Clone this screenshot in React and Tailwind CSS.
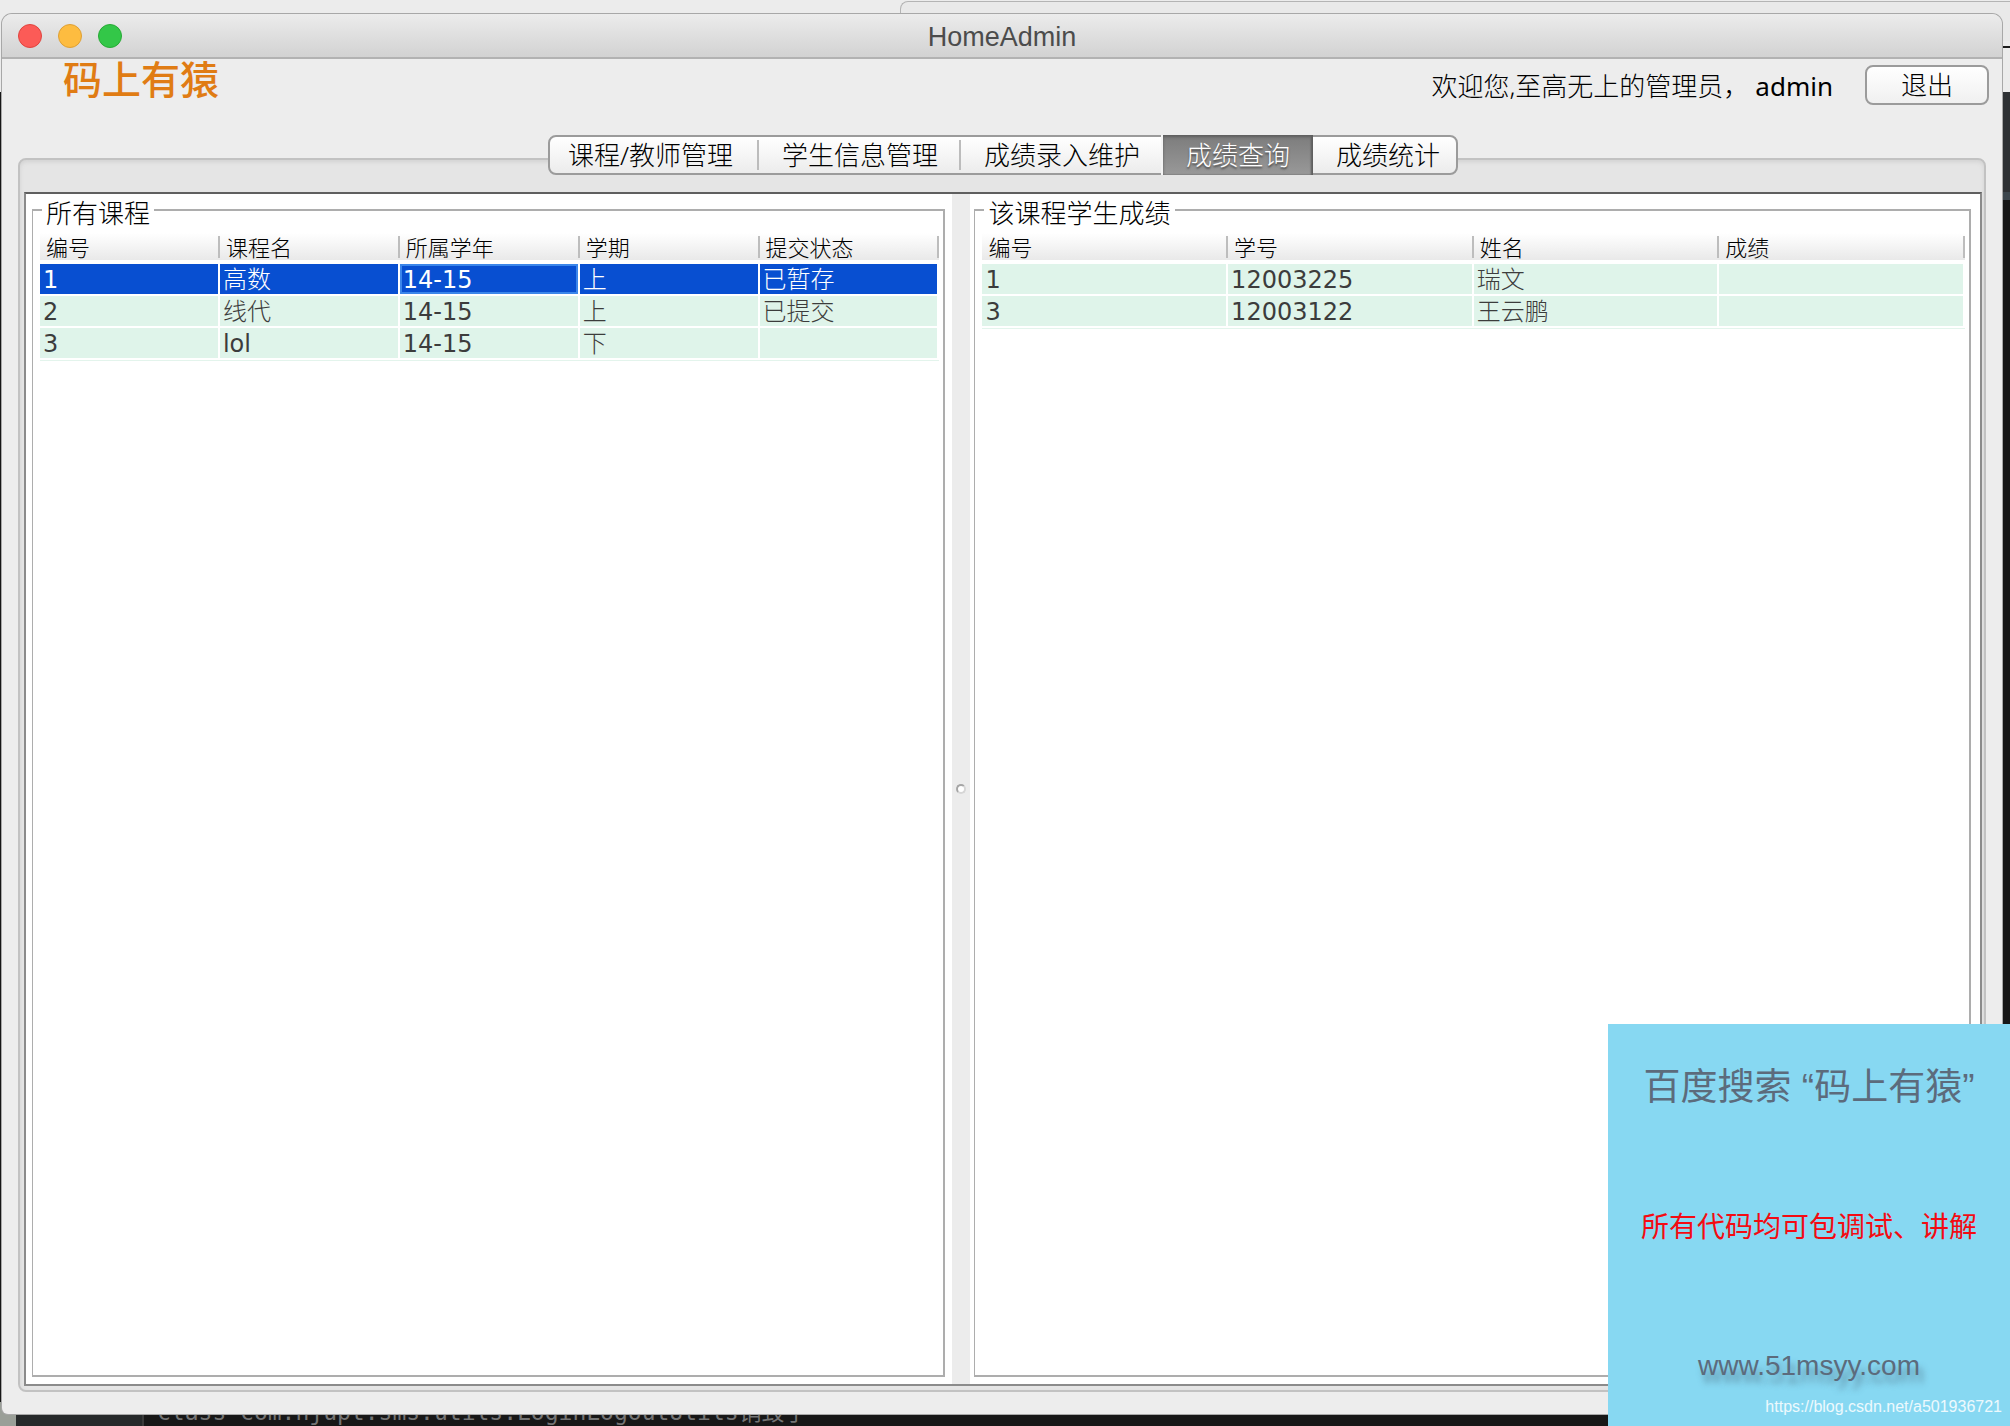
import { useState } from "react";

const TABS = [
  "课程/教师管理",
  "学生信息管理",
  "成绩录入维护",
  "成绩查询",
  "成绩统计",
];

const COURSE_COLUMNS = ["编号", "课程名", "所属学年", "学期", "提交状态"];
const COURSES = [
  ["1", "高数", "14-15", "上", "已暂存"],
  ["2", "线代", "14-15", "上", "已提交"],
  ["3", "lol", "14-15", "下", ""],
];

const SCORE_COLUMNS = ["编号", "学号", "姓名", "成绩"];
const SCORES = [
  ["1", "12003225", "瑞文", ""],
  ["3", "12003122", "王云鹏", ""],
];

const isLatin = (text) => /^[\x20-\x7e]+$/.test(text);

// Whatever is open behind the main window
function Backdrop() {
  return (
    <div aria-hidden="true" className="absolute inset-0 bg-[#171717]">
      <div className="absolute inset-x-0 top-0 h-[92px] bg-[#ececec]" />
      <div className="absolute right-0 top-[46px] h-[2px] w-4 bg-[#1c1c1c]" />
      <div className="absolute right-0 top-[92px] h-[100px] w-4 bg-[#2e3134]" />
      <div className="absolute right-0 top-[192px] h-2 w-4 bg-[#3c464d]" />
      <div className="absolute left-[900px] right-0 top-px h-10 rounded-tl-lg border-l border-t border-[#b4b4b4] bg-[#e9e9e9]" />
      <div className="absolute bottom-0 left-0 h-6 w-4 bg-[#9a9f98]" />
      <div className="absolute bottom-0 left-4 h-3 w-32 border-r-2 border-[#3a3a3a] bg-[#26292a]" />
      <p className="absolute bottom-0 left-[157px] whitespace-nowrap font-['DejaVu_Sans_Mono','Noto_Sans_CJK_SC',monospace] text-[23px] leading-7 text-[#747474]">
        class com.njupt.sms.utils.LoginLogoutUtils销毁了
      </p>
    </div>
  );
}

function TitleBar() {
  return (
    <div className="relative flex h-[45px] items-center justify-center rounded-t-[10px] border-b-2 border-[#b2b2b2] bg-linear-to-b from-[#ececec] to-[#d2d2d2]">
      <div className="absolute left-4 flex gap-4">
        <button
          aria-label="关闭"
          className="size-6 rounded-full border border-[#e0443e] bg-[#fc5b57]"
        />
        <button
          aria-label="最小化"
          className="size-6 rounded-full border border-[#dea035] bg-[#fdbc40]"
        />
        <button
          aria-label="缩放"
          className="size-6 rounded-full border border-[#27aa35] bg-[#33c748]"
        />
      </div>
      <h1 className="pt-[3px] font-['Liberation_Sans',sans-serif] text-[27px] leading-8 text-[#4c4c4c]">
        HomeAdmin
      </h1>
    </div>
  );
}

function DataTable({ columns, rows, selectedRow, focusedCol, onSelect }) {
  return (
    <table className="mt-[9px] w-full table-fixed border-separate border-spacing-0 border-b border-[#e3f4ec]">
      <thead>
        <tr>
          {columns.map((name) => (
            <th
              key={name}
              className="relative h-[31px] border-b-4 border-white bg-linear-to-b from-white via-[#f4f4f4] to-[#e9e9e9] bg-clip-padding p-0 pl-[6px] text-left text-[22px] font-light leading-[26px] text-black after:absolute after:right-0 after:top-[3px] after:h-[22px] after:w-[2px] after:bg-[#bdbdbd]"
            >
              {name}
            </th>
          ))}
        </tr>
      </thead>
      <tbody>
        {rows.map((row, r) => (
          <tr key={row[0]} onClick={() => onSelect?.(r)}>
            {row.map((value, c) => {
              const selected = r === selectedRow;
              return (
                <td
                  key={columns[c]}
                  className={`h-8 border-b-2 border-r-2 border-white bg-clip-padding p-0 pl-[3px] pt-[2px] font-['DejaVu_Sans','Noto_Sans_CJK_SC',sans-serif] text-[24px] leading-7 ${
                    isLatin(value) ? "font-normal" : "font-light"
                  } ${
                    selected
                      ? "bg-[#084fd1] text-white"
                      : "bg-[#dff4ea] text-[#3c3c3c]"
                  } ${selected && c === focusedCol ? "shadow-[inset_0_0_0_2px_#3b86ea]" : ""}`}
                >
                  {value}
                </td>
              );
            })}
          </tr>
        ))}
      </tbody>
    </table>
  );
}

function Group({ title, children }) {
  return (
    <fieldset className="min-w-0 flex-1 border-2 border-l border-[#adadad] bg-white pl-[7px] pr-1">
      <legend className="ml-[2px] px-1 pt-[6px] text-[26px] font-light leading-[22px] text-black">
        {title}
      </legend>
      {children}
    </fieldset>
  );
}

function Promo() {
  return (
    <aside className="absolute bottom-0 right-0 flex h-[402px] w-[402px] flex-col items-center bg-[#87d8f2] pt-[38px] font-['Liberation_Sans','Noto_Sans_CJK_SC',sans-serif]">
      <p className="whitespace-nowrap text-[37px] leading-[52px] text-[#5c6b7c]">
        百度搜索 “码上有猿”
      </p>
      <p className="mt-[90px] whitespace-nowrap text-[28px] leading-[48px] text-[#f40b12]">
        所有代码均可包调试、讲解
      </p>
      <p className="mt-[90px] text-[28px] leading-[48px] text-[#5c6b7c] [text-shadow:4px_8px_6px_rgba(70,100,120,0.6)]">
        www.51msyy.com
      </p>
      <a
        href="https://blog.csdn.net/a501936721"
        className="absolute bottom-[7px] right-2 text-[16px] leading-6 text-white/85"
      >
        https://blog.csdn.net/a501936721
      </a>
    </aside>
  );
}

export default function App() {
  const [activeTab, setActiveTab] = useState("成绩查询");
  const [selectedCourse, setSelectedCourse] = useState(0);

  return (
    <div className="relative flex min-h-screen flex-col overflow-hidden pb-3 pl-[2px] pr-2 pt-[14px] font-['Noto_Sans','Noto_Sans_CJK_SC',sans-serif]">
      <Backdrop />

      <div className="relative flex flex-1 flex-col rounded-t-[10px] rounded-b-[6px] bg-[#ededed] shadow-[0_0_0_1px_#a8a8a8]">
        <TitleBar />

        <header className="flex h-[76px] items-start justify-between pl-[61px] pr-[13px] pt-[6px]">
          <span className="-mt-[10px] text-[39px] font-medium leading-[48px] text-[#e07c14]">
            码上有猿
          </span>
          <div className="flex items-start gap-8">
            <p className="flex gap-[6px] pt-px text-[26px] font-light leading-10 text-black">
              <span>欢迎您,至高无上的管理员，</span>
              <span className="font-normal">admin</span>
            </p>
            <button className="h-10 w-[124px] rounded-lg border-2 border-[#9b9b9b] bg-linear-to-b from-white to-[#f0f0f0] text-[26px] font-light leading-8 text-black">
              退出
            </button>
          </div>
        </header>

        <main className="relative z-0 mx-4 mb-[22px] flex flex-1 flex-col pb-[6px] pl-[6px] pr-1">
          <div className="absolute inset-x-0 bottom-0 top-[23px] -z-10 rounded-lg border-2 border-[#c2c2c2] bg-[#e5e5e5] shadow-[inset_0_2px_4px_#d2d2d2]" />

          <nav
            role="tablist"
            className="mb-[17px] flex h-10 self-center rounded-lg border-2 border-[#9b9b9b] bg-linear-to-b from-white to-[#ececec]"
          >
            {TABS.map((tab) => (
              <button
                key={tab}
                role="tab"
                aria-selected={tab === activeTab}
                onClick={() => setActiveTab(tab)}
                className={`relative whitespace-nowrap px-[23px] text-[26px] font-light leading-9 first:pl-[18px] first:pr-[26px] last:pr-4 ${
                  tab === activeTab
                    ? "-my-[2px] bg-linear-to-b from-[#7c7c7c] to-[#999999] text-white shadow-[-2px_0_0_#f4f4f4,inset_0_2px_3px_#5e5e5e,inset_-2px_0_2px_#5e5e5e] [text-shadow:0_2px_2px_#4a4a4a]"
                    : "text-black after:absolute after:right-0 after:top-[3px] after:h-[30px] after:w-[2px] after:bg-[#bcbcbc] last:after:hidden"
                }`}
              >
                {tab}
              </button>
            ))}
          </nav>

          <div className="flex flex-1 border-2 border-[#8b8b8b] border-t-[#5f5f5f] bg-white">
            <section className="flex min-w-0 flex-[11_1_0] pb-[7px] pl-[6px] pr-[7px] pt-[2px]">
              <Group title="所有课程">
                <DataTable
                  columns={COURSE_COLUMNS}
                  rows={COURSES}
                  selectedRow={selectedCourse}
                  focusedCol={2}
                  onSelect={setSelectedCourse}
                />
              </Group>
            </section>

            <div
              role="separator"
              className="flex w-[18px] shrink-0 items-center justify-center bg-[#ececec]"
            >
              <span className="size-[10px] rounded-full border-2 border-[#d6d6d6] border-l-[#a6a6a6] border-t-[#a6a6a6] bg-white" />
            </div>

            <section className="flex min-w-0 flex-[12_1_0] pb-[7px] pl-1 pr-[9px] pt-[2px]">
              <Group title="该课程学生成绩">
                <DataTable columns={SCORE_COLUMNS} rows={SCORES} />
              </Group>
            </section>
          </div>
        </main>
      </div>

      <Promo />
    </div>
  );
}
